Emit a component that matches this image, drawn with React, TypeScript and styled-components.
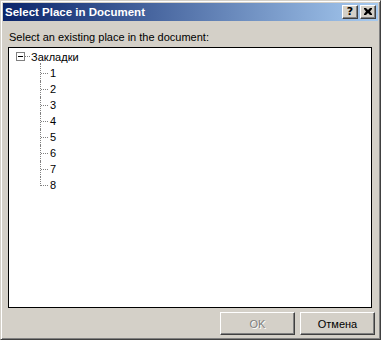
import React from 'react';
import styled, { createGlobalStyle } from 'styled-components';

const GlobalStyle = createGlobalStyle`
  html, body {
    margin: 0;
    padding: 0;
    background: #d4d0c8;
  }
  * {
    box-sizing: border-box;
  }
`;

const items = ['1', '2', '3', '4', '5', '6', '7', '8'];

function App() {
  return (
    <>
      <GlobalStyle />
      <Window>
        <TitleBar>
          <TitleText>Select Place in Document</TitleText>
          <TitleButtons>
            <CaptionButton>?</CaptionButton>
            <CaptionButton>
              <svg width="8" height="7" viewBox="0 0 8 7">
                <path d="M0 0h2l2 2 2-2h2v1L6 3.5 8 6v1H6L4 5 2 7H0V6l2-2.5L0 1z" fill="#000" />
              </svg>
            </CaptionButton>
          </TitleButtons>
        </TitleBar>
        <Body>
          <Label>Select an existing place in the document:</Label>
          <TreeBox>
            <RootRow>
              <Expander>
                <Minus />
              </Expander>
              Закладки
            </RootRow>
            {items.map((n, i) => (
              <ChildRow key={n} $first={i === 0} $last={i === items.length - 1}>
                {n}
              </ChildRow>
            ))}
          </TreeBox>
          <ButtonRow>
            <PushButton disabled>OK</PushButton>
            <PushButton>Отмена</PushButton>
          </ButtonRow>
        </Body>
      </Window>
    </>
  );
}

export default App;

const Window = styled.div`
  width: 381px;
  height: 340px;
  display: flex;
  flex-direction: column;
  padding: 2px;
  background: #d4d0c8;
  border-top: 1px solid #d4d0c8;
  border-left: 1px solid #d4d0c8;
  border-right: 1px solid #404040;
  border-bottom: 1px solid #404040;
  box-shadow: inset 1px 1px #ffffff, inset -1px -1px #808080;
  font-family: 'Liberation Sans', Arial, sans-serif;
  font-size: 11px;
  color: #000;
`;

const TitleBar = styled.div`
  height: 18px;
  flex: none;
  display: flex;
  align-items: center;
  justify-content: space-between;
  padding: 0 2px;
  background: linear-gradient(to right, #0a246a, #a6caf0);
`;

const TitleText = styled.div`
  color: #ffffff;
  font-weight: bold;
  font-size: 11.5px;
`;

const TitleButtons = styled.div`
  display: flex;
  gap: 2px;
`;

const CaptionButton = styled.div`
  width: 16px;
  height: 14px;
  display: flex;
  align-items: center;
  justify-content: center;
  background: #d4d0c8;
  border-top: 1px solid #ffffff;
  border-left: 1px solid #ffffff;
  border-right: 1px solid #404040;
  border-bottom: 1px solid #404040;
  box-shadow: inset -1px -1px #808080;
  font-family: 'DejaVu Sans', sans-serif;
  font-weight: bold;
  font-size: 11px;
  line-height: 1;
  padding-bottom: 1px;
`;

const Body = styled.div`
  flex: 1;
  display: flex;
  flex-direction: column;
  padding: 9px 3px 2px 5px;
`;

const Label = styled.div`
  height: 14px;
  line-height: 14px;
  margin: 0 0 3px 1px;
`;

const TreeBox = styled.div`
  flex: 1;
  width: 364px;
  background: #ffffff;
  border: 1px solid #000000;
  padding-top: 1px;
`;

const RootRow = styled.div`
  position: relative;
  height: 16px;
  line-height: 16px;
  padding-left: 22px;

  &::after {
    content: '';
    position: absolute;
    left: 16px;
    top: 7px;
    width: 5px;
    border-top: 1px dotted #808080;
  }
`;

const Expander = styled.span`
  position: absolute;
  left: 7px;
  top: 3px;
  width: 9px;
  height: 9px;
  border: 1px solid #808080;
  background: #ffffff;
`;

const Minus = styled.span`
  position: absolute;
  left: 1px;
  top: 3px;
  width: 5px;
  height: 1px;
  background: #000000;
`;

const ChildRow = styled.div<{ $first: boolean; $last: boolean }>`
  position: relative;
  height: 16px;
  line-height: 16px;
  padding-left: 41px;

  &::before {
    content: '';
    position: absolute;
    left: 32px;
    top: 8px;
    width: 7px;
    border-top: 1px dotted #808080;
  }

  &::after {
    content: '';
    position: absolute;
    left: 31px;
    top: ${({ $first }) => ($first ? '-2px' : '0')};
    height: ${({ $first, $last }) => ($last ? '9px' : $first ? '18px' : '16px')};
    border-left: 1px dotted #808080;
  }
`;

const ButtonRow = styled.div`
  display: flex;
  justify-content: flex-end;
  gap: 5px;
  margin-top: 4px;
  height: 23px;
`;

const PushButton = styled.button`
  width: 75px;
  height: 23px;
  padding: 0;
  background: #d4d0c8;
  border-top: 1px solid #ffffff;
  border-left: 1px solid #ffffff;
  border-right: 1px solid #404040;
  border-bottom: 1px solid #404040;
  box-shadow: inset -1px -1px #808080;
  font-family: 'Liberation Sans', Arial, sans-serif;
  font-size: 11px;
  font-weight: normal;
  color: #000000;

  &:disabled {
    color: #808080;
    text-shadow: 1px 1px #ffffff;
  }
`;
